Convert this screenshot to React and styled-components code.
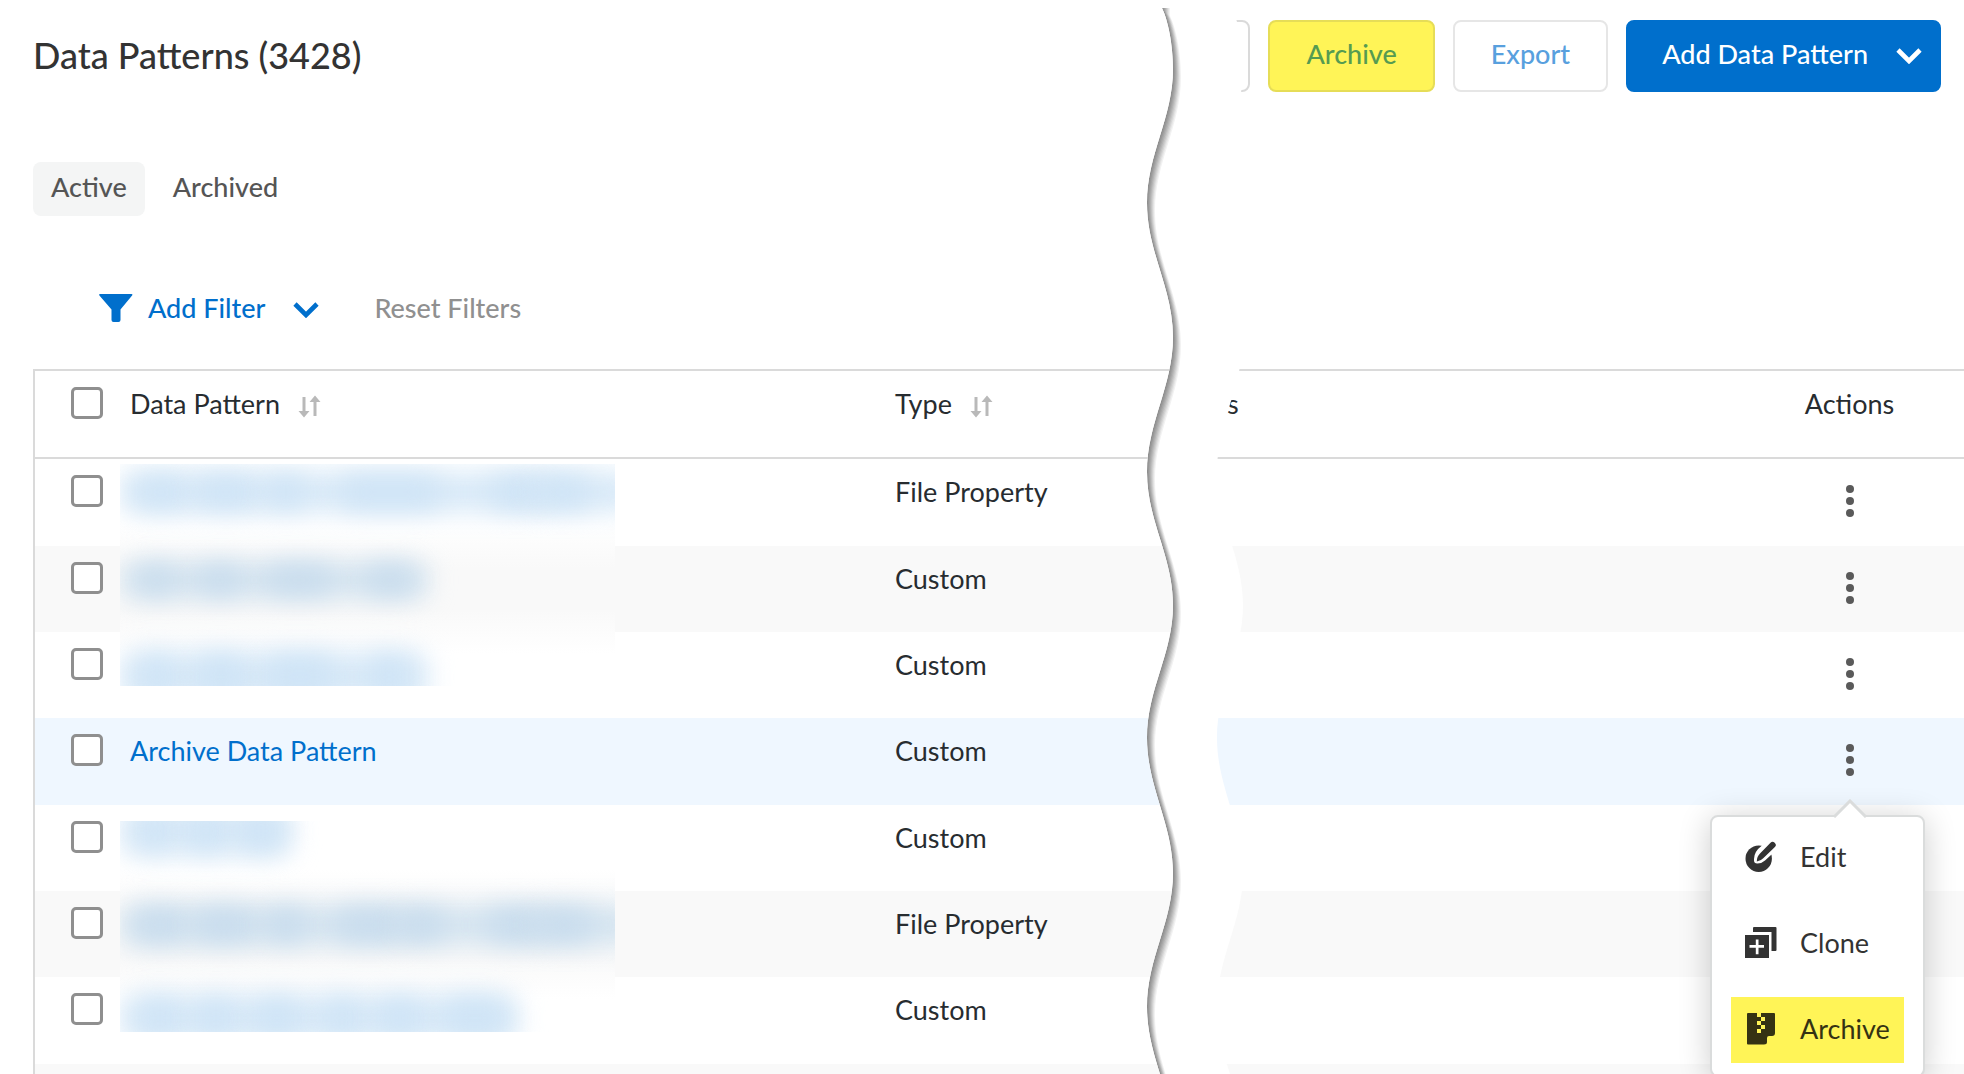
import React, { useState } from "react";
import styled, { createGlobalStyle, css } from "styled-components";

const GlobalStyle = createGlobalStyle`
  * {
    box-sizing: border-box;
  }
  body {
    margin: 0;
    background: #fff;
    color: #272c30;
    font-family: Lato, "Open Sans", sans-serif;
    font-size: 27px;
    line-height: 34px;
  }
  button, input {
    font: inherit;
  }
`;
const Page = styled.div`
  position: relative;
  height: 100vh;
  overflow: hidden;
`;
const Header = styled.header`
  display: flex;
  align-items: center;
  justify-content: space-between;
  padding: 20px 23px 0 33px;
`;
const Title = styled.h1`
  margin: 0;
  padding-bottom: 2px;
  color: #333;
  font-size: 36px;
  font-weight: 500;
  line-height: 44px;
`;
const Toolbar = styled.div`
  display: flex;
  gap: 18px;
`;
const ToolButton = styled.button`
  display: flex;
  align-items: center;
  min-width: 76px;
  height: 72px;
  padding: 15px 36px 19px;
  border: 2px solid ${p => (p.$faded ? "#e6e6e6" : "#dadada")};
  border-radius: 8px;
  background: #fff;
  color: #58a0de;
  font-weight: 500;
  cursor: pointer;
  ${p =>
    p.$marked &&
    css`
      border-color: #e6dd57;
      background: #fff457;
      color: #569b51;
    `}
  ${p =>
    p.$primary &&
    css`
      gap: 28px;
      padding: 15px 17px 19px 34px;
      border-color: #006fcc;
      background: #006fcc;
      color: #fff;
    `}
`;
const Tabs = styled.nav`
  display: flex;
  gap: 10px;
  margin: 70px 33px 0;
`;
const Tab = styled.button`
  padding: 8px 18px 12px;
  border: 0;
  border-radius: 8px;
  background: ${p => (p.$active ? "#f4f5f5" : "transparent")};
  color: #555;
  font-weight: 500;
  cursor: pointer;
`;
const FilterBar = styled.div`
  display: flex;
  gap: 55px;
  margin: 75px 33px 44px 99px;
`;
const FilterButton = styled.button`
  display: flex;
  align-items: center;
  padding: 0;
  border: 0;
  background: none;
  color: ${p => (p.$muted ? "#909090" : "#006fcc")};
  font-weight: 500;
  cursor: pointer;
`;
const FilterLabel = styled.span`
  margin: 0 28px 0 15px;
`;
const TableWrap = styled.div`
  position: relative;
  margin-left: 33px;
  border-top: 2px solid #dadada;
  border-left: 2px solid #dadada;
`;
const Table = styled.table`
  width: 100%;
  table-layout: fixed;
  border-collapse: separate;
  border-spacing: 0;
`;
const Th = styled.th`
  width: ${p => p.$width || "auto"};
  height: 88px;
  padding: 16px 0 0;
  border-bottom: 2px solid #dadada;
  font-weight: 400;
  text-align: ${p => (p.$center ? "center" : "left")};
  vertical-align: top;
`;
const Row = styled.tr`
  height: 86px;
  background: #fff;
  &:nth-child(3n + 1) {
    height: 87px;
  }
  &:nth-child(even) {
    background: #f9f9f9;
  }
  &&:nth-child(n) {
    ${p => p.$open && "background: #eff7ff;"}
  }
`;
const Td = styled.td`
  position: relative;
  padding: 16px 0 0;
  text-align: ${p => (p.$center ? "center" : "left")};
  vertical-align: top;
`;
const Checkbox = styled.input`
  appearance: none;
  display: block;
  width: 32px;
  height: 32px;
  margin: 0 0 0 36px;
  border: 3px solid #8f8f8f;
  border-radius: 5px;
  background: #fff;
  &:checked {
    background: #006fcc;
  }
`;
const SortButton = styled.button`
  display: inline-flex;
  align-items: center;
  gap: 18px;
  padding: 0;
  border: 0;
  background: none;
  color: inherit;
  cursor: pointer;
`;
const PatternLink = styled.a`
  color: #006fcc;
  text-decoration: none;
`;
const KebabButton = styled.button`
  display: inline-flex;
  align-items: center;
  justify-content: center;
  width: 40px;
  height: 52px;
  padding: 0;
  border: 0;
  background: none;
  cursor: pointer;
`;
const Menu = styled.div`
  position: absolute;
  z-index: 3;
  top: 97px;
  right: 39px;
  display: flex;
  flex-direction: column;
  gap: 20px;
  width: 215px;
  padding: 8px 19px 12px;
  border: 2px solid #dadcdc;
  border-radius: 8px;
  background: #fff;
  box-shadow: 0 4px 32px rgba(0, 0, 0, 0.2);
`;
const MenuArrow = styled.svg`
  position: absolute;
  top: -18px;
  right: 56px;
`;
const MenuItem = styled.button`
  display: flex;
  align-items: center;
  gap: 23px;
  height: 66px;
  padding: 0 0 3px 14px;
  border: 0;
  background: ${p => (p.$marked ? "#fff457" : "none")};
  color: ${p => (p.$marked ? "#353213" : "#333")};
  cursor: pointer;
`;
const Redacted = styled.div`
  position: absolute;
  top: ${p => p.$top}px;
  left: 85px;
  width: 495px;
  height: ${p => p.$height}px;
  overflow: hidden;
  background: linear-gradient(
    #fff ${p => p.$band - 22}px,
    #f9f9f9 ${p => p.$band + 22}px,
    #f9f9f9 ${p => p.$band + 64}px,
    #fff ${p => p.$band + 108}px
  );
`;
const Smudge = styled.span`
  position: absolute;
  left: ${p => p.$x}px;
  top: ${p => p.$y}px;
  width: ${p => p.$w}px;
  height: ${p => p.$h}px;
  border-radius: 12px;
  background: ${p => p.$color};
  filter: blur(13px);
`;
const Tear = styled.svg`
  position: absolute;
  z-index: 2;
  top: 0;
  right: 721px;
  overflow: visible;
  pointer-events: none;
`;

const ChevronIcon = () => (
  <svg width="26" height="20" viewBox="0 -4 26 20" fill="none" stroke="currentColor" strokeWidth="4.6" aria-hidden="true">
    <path d="M2 2 13 13 24 2" />
  </svg>
);
const FunnelIcon = () => (
  <svg width="34" height="30" viewBox="0 -1 34 30" fill="currentColor" aria-hidden="true">
    <path d="M1 0h31.500q1.500 0 .6 1.400L21.500 15.500v10.500q0 2-2 2h-5q-2 0-2-2V15.500L.4 1.400Q-.4 0 1 0z" />
  </svg>
);
const SortIcon = () => (
  <svg width="23" height="28" viewBox="0 -5 23 28" fill="#b9b9b9" aria-hidden="true">
    <path d="M4.500 2h3v14h4L6 22.500.500 16h4zM15.500 21h3V7h4L17 .500 11.500 7h4z" />
  </svg>
);
const DotsIcon = () => (
  <svg width="8" height="32" viewBox="0 0 8 32" fill="#5a5a5a" aria-hidden="true">
    <circle cx="4" cy="4" r="4" />
    <circle cx="4" cy="16" r="4" />
    <circle cx="4" cy="28" r="4" />
  </svg>
);
const EditIcon = () => (
  <svg width="32" height="32" viewBox="0 0 32 32" fill="currentColor" aria-hidden="true">
    <circle cx="13.700" cy="17.700" r="13.200" />
    <path d="M17 4.500Q9 10.500 9 18v1.500q0 3 3.500 2.900 4.500 0 7.500-2.900l6-5.500 6-5V-1H21z" fill="#fff" />
    <path d="M11.800 20.500q0-5 3.200-8L25.500 1.700q2-2 4.200 0 2.300 2.200.2 4.400L18.500 17q-2.700 3-6.700 3.500z" />
  </svg>
);
const CloneIcon = () => (
  <svg width="32" height="32" viewBox="0 0 32 32" fill="currentColor" aria-hidden="true">
    <path d="M9 0h21.500q1 0 1 1v22q0 1-1 1h-4V5H8V1q0-1 1-1z" />
    <path d="M0 8h24v23H0z" />
    <path d="M10.800 12.500h2.700V18H19v2.700h-5.500v6.500h-2.700v-6.500H4.500V18h6.300z" fill="#fff" />
  </svg>
);
const ArchiveIcon = () => (
  <svg width="32" height="32" viewBox="0 0 32 32" fill="currentColor" aria-hidden="true">
    <path d="M3 0h26q1 0 1 1v19q0 3-3 3h-3q-2 0-2 2v4q0 2.500-3 2.500H3q-1 0-1-1V1q0-1 1-1z" />
    <path d="M12 0h4v4h-4zM16 4h4v4h-4zM12 8h4v4h-4zM16 12h4v4h-4zM12 16h4v4h-4z" fill="#fff457" />
  </svg>
);

// strip between the two halves of the page: wavy on both sides, shaded on the left
const LEFT_EDGE =
  "M15 8C21 20 26 45 26 69c0 49-26 85-26 134s26 85 26 134-26 86-26 135 26 84 26 133-26 84-26 133 26 86 26 135-26 85-26 134 26 85 26 134";
const TEAR_SHAPE = `${LEFT_EDGE}H96c0-49-26-85-26-134s26-85 26-134-26-86-26-135 26-84 26-133-26-84-26-133 26-86 26-135-26-85-26-134 26-85 26-134C96 45 91 20 85 8z`;
const SHADES = ["#8f8f8f", "#999", "#a6a6a6", "#b4b4b4", "#c4c4c4", "#d4d4d4", "#e4e4e4", "#f2f2f2", "#fff"];

const TearLine = () => (
  <Tear width="96" height="1074" aria-hidden="true">
    <clipPath id="tear">
      <path d={TEAR_SHAPE} />
    </clipPath>
    <path d={TEAR_SHAPE} fill="#fff" />
    <g clipPath="url(#tear)">
      {SHADES.map((shade, i) => (
        <path key={shade} d={`${LEFT_EDGE}H50V-20H15z`} fill={shade} transform={`translate(${i} ${i})`} />
      ))}
    </g>
  </Tear>
);

const BLUE = "#d9eaf8";
const DEEP_BLUE = "#cfe4f6";
const GREY_BLUE = "#d4e4f0";
const DEEP_GREY_BLUE = "#c8dced";

// one blurred name: a pale bar from x to x + w, with darker [x, w] words on it
const smudgeLine = (x, w, y, h, grey, words) => [
  { x, y, w, h, color: grey ? GREY_BLUE : BLUE },
  ...words.map(([wx, ww]) => ({ x: wx, y: y + 4, w: ww, h: h - 8, color: grey ? DEEP_GREY_BLUE : DEEP_BLUE })),
];

const REDACTED = [
  {
    top: 93,
    height: 222,
    band: 82,
    smudges: [
      ...smudgeLine(0, 520, 8, 40, false, [[16, 50], [76, 60], [146, 40], [220, 100], [370, 54], [414, 56]]),
      ...smudgeLine(0, 308, 98, 36, true, [[18, 38], [78, 44], [146, 66], [246, 48]]),
      ...smudgeLine(0, 308, 188, 50, false, [[20, 34], [76, 50], [146, 68], [250, 38]]),
    ],
  },
  {
    top: 450,
    height: 211,
    band: 70,
    smudges: [
      ...smudgeLine(0, 172, -14, 48, false, [[20, 30], [68, 36], [120, 42]]),
      ...smudgeLine(0, 520, 84, 40, true, [[16, 48], [74, 60], [146, 40], [216, 66], [280, 44], [368, 54], [416, 56]]),
      ...smudgeLine(0, 398, 174, 46, false, [[20, 40], [76, 40], [134, 46], [204, 36], [258, 44], [324, 62]]),
    ],
  },
];

const PATTERNS = [
  { id: 1, type: "File Property" },
  { id: 2, type: "Custom" },
  { id: 3, type: "Custom" },
  { id: 4, type: "Custom", name: "Archive Data Pattern" },
  { id: 5, type: "Custom" },
  { id: 6, type: "File Property" },
  { id: 7, type: "Custom" },
  { id: 8, type: "" },
];

const ActionsMenu = () => (
  <Menu>
    <MenuArrow width="34" height="19" viewBox="0 0 34 19" aria-hidden="true">
      <path d="M1 18 17 2l16 16" fill="#fff" stroke="#dadcdc" strokeWidth="3" />
    </MenuArrow>
    <MenuItem>
      <EditIcon />
      Edit
    </MenuItem>
    <MenuItem>
      <CloneIcon />
      Clone
    </MenuItem>
    <MenuItem $marked>
      <ArchiveIcon />
      Archive
    </MenuItem>
  </Menu>
);

export default function App() {
  const [tab, setTab] = useState("Active");
  const [openId, setOpenId] = useState(4);
  const [selected, setSelected] = useState([]);

  const toggle = id => {
    setSelected(selected.includes(id) ? selected.filter(s => s !== id) : [...selected, id]);
  };
  const toggleAll = e => setSelected(e.target.checked ? PATTERNS.map(p => p.id) : []);

  return (
    <>
      <GlobalStyle />
      <Page>
        <Header>
          <Title>Data Patterns (3428)</Title>
          <Toolbar>
            <ToolButton aria-label="Delete" />
            <ToolButton $marked>Archive</ToolButton>
            <ToolButton $faded>Export</ToolButton>
            <ToolButton $primary>
              Add Data Pattern
              <ChevronIcon />
            </ToolButton>
          </Toolbar>
        </Header>
        <Tabs>
          {["Active", "Archived"].map(name => (
            <Tab key={name} $active={tab === name} onClick={() => setTab(name)}>
              {name}
            </Tab>
          ))}
        </Tabs>
        <FilterBar>
          <FilterButton>
            <FunnelIcon />
            <FilterLabel>Add Filter</FilterLabel>
            <ChevronIcon />
          </FilterButton>
          <FilterButton $muted>Reset Filters</FilterButton>
        </FilterBar>
        <TableWrap>
          <Table>
            <thead>
              <tr>
                <Th $width="95px">
                  <Checkbox
                    type="checkbox"
                    aria-label="Select all"
                    checked={selected.length === PATTERNS.length}
                    onChange={toggleAll}
                  />
                </Th>
                <Th>
                  <SortButton>
                    Data Pattern
                    <SortIcon />
                  </SortButton>
                </Th>
                <Th $width="332px">
                  <SortButton>
                    Type
                    <SortIcon />
                  </SortButton>
                </Th>
                <Th $width="508px">s</Th>
                <Th $width="229px" $center>
                  Actions
                </Th>
              </tr>
            </thead>
            <tbody>
              {PATTERNS.map(p => (
                <Row key={p.id} $open={openId === p.id}>
                  <Td>
                    <Checkbox
                      type="checkbox"
                      aria-label={`Select row ${p.id}`}
                      checked={selected.includes(p.id)}
                      onChange={() => toggle(p.id)}
                    />
                  </Td>
                  <Td>{p.name && <PatternLink href="#pattern">{p.name}</PatternLink>}</Td>
                  <Td>{p.type}</Td>
                  <Td />
                  <Td $center>
                    <KebabButton
                      aria-label={`Actions for row ${p.id}`}
                      onClick={() => setOpenId(openId === p.id ? null : p.id)}
                    >
                      <DotsIcon />
                    </KebabButton>
                    {openId === p.id && <ActionsMenu />}
                  </Td>
                </Row>
              ))}
            </tbody>
          </Table>
          {REDACTED.map(block => (
            <Redacted key={block.top} $top={block.top} $height={block.height} $band={block.band}>
              {block.smudges.map((s, i) => (
                <Smudge key={i} $x={s.x} $y={s.y} $w={s.w} $h={s.h} $color={s.color} />
              ))}
            </Redacted>
          ))}
        </TableWrap>
        <TearLine />
      </Page>
    </>
  );
}
